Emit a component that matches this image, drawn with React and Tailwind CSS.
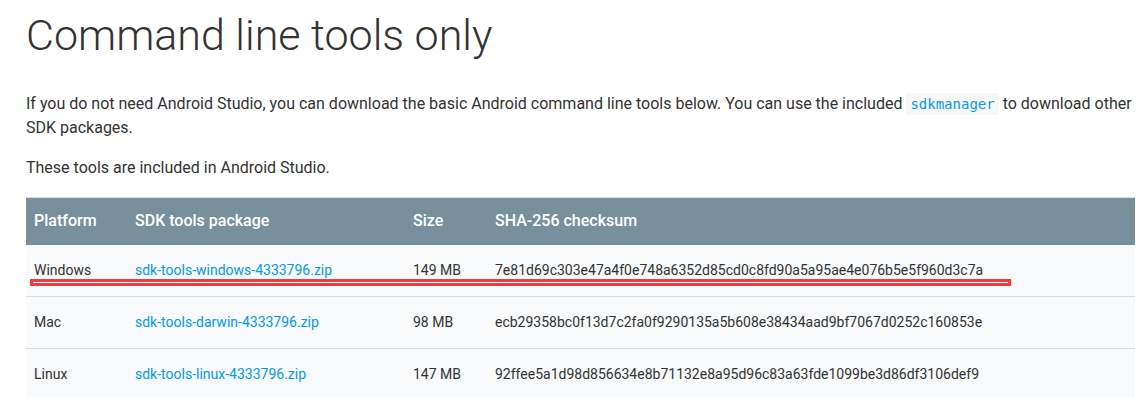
import React from "react";

const rows = [
  {
    platform: "Windows",
    pkg: "sdk-tools-windows-4333796.zip",
    size: "149 MB",
    sha: "7e81d69c303e47a4f0e748a6352d85cd0c8fd90a5a95ae4e076b5e5f960d3c7a",
  },
  {
    platform: "Mac",
    pkg: "sdk-tools-darwin-4333796.zip",
    size: "98 MB",
    sha: "ecb29358bc0f13d7c2fa0f9290135a5b608e38434aad9bf7067d0252c160853e",
  },
  {
    platform: "Linux",
    pkg: "sdk-tools-linux-4333796.zip",
    size: "147 MB",
    sha: "92ffee5a1d98d856634e8b71132e8a95d96c83a63fde1099be3d86df3106def9",
  },
];

export default function App() {
  return (
    <div className="w-[1140px] h-[397px] overflow-hidden bg-white pl-[26px] font-['Roboto',sans-serif] text-[#333]">
      <h1 className="pt-[7px] text-[43px] leading-[56px] font-light text-[#333]">
        Command line tools only
      </h1>
      <p className="mt-[29px] w-[1114px] text-[16px] leading-[24px]">
        If you do not need Android Studio, you can download the basic Android command line tools below. You can use the included{" "}
        <code className="bg-[#f7f7f7] px-[4px] py-[3px] font-['DejaVu_Sans_Mono',monospace] text-[14px] text-[#039be5]">
          sdkmanager
        </code>{" "}
        to download other SDK packages.
      </p>
      <p className="mt-[16px] text-[16px] leading-[24px]">These tools are included in Android Studio.</p>
      <div className="relative mt-[17px] w-[1109px]">
        <table className="w-full table-fixed border-collapse border-t border-[#dadce0] text-left">
          <colgroup>
            <col className="w-[101px]" />
            <col className="w-[278px]" />
            <col className="w-[82px]" />
            <col />
          </colgroup>
          <thead>
            <tr className="h-[47px] bg-[#78909c] text-white">
              <th className="px-[8px] text-[16px] font-medium">Platform</th>
              <th className="px-[8px] text-[16px] font-medium">SDK tools package</th>
              <th className="px-[8px] text-[16px] font-medium">Size</th>
              <th className="px-[8px] text-[16px] font-medium">SHA-256 checksum</th>
            </tr>
          </thead>
          <tbody>
            {rows.map((row) => (
              <tr key={row.platform} className="h-[52px] border-b border-[#dadce0] bg-[#f7f9fa] text-[14px]">
                <td className="px-[8px]">{row.platform}</td>
                <td className="px-[8px]">
                  <a href="#" className="text-[#039be5]">
                    {row.pkg}
                  </a>
                </td>
                <td className="px-[8px]">{row.size}</td>
                <td className="px-[8px]">{row.sha}</td>
              </tr>
            ))}
          </tbody>
        </table>
        {/* red annotation under the Windows row */}
        <div className="absolute left-[4px] top-[82px] h-[7px] w-[981px] border-[3px] border-[#f23c3c] bg-white" />
      </div>
    </div>
  );
}
